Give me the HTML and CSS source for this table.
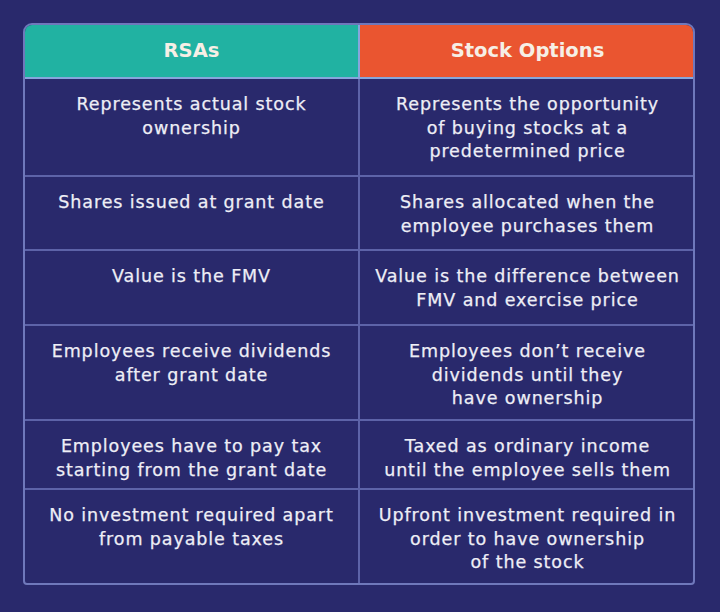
FILE: index.html
```html
<!DOCTYPE html>
<html lang="en">
<head>
<meta charset="utf-8">
<title>RSAs vs Stock Options</title>
<link rel="stylesheet" href="styles.css">
</head>
<body>
<div class="page">
  <div class="table">
    <div class="head head-rsa">RSAs</div>
    <div class="head head-opt">Stock Options</div>

    <div class="cell r1">Represents actual stock<br>ownership</div>
    <div class="cell r1 right">Represents the opportunity<br>of buying stocks at a<br>predetermined price</div>

    <div class="cell r2">Shares issued at grant date</div>
    <div class="cell r2 right">Shares allocated when the<br>employee purchases them</div>

    <div class="cell r3">Value is the FMV</div>
    <div class="cell r3 right">Value is the difference between<br>FMV and exercise price</div>

    <div class="cell r4">Employees receive dividends<br>after grant date</div>
    <div class="cell r4 right">Employees don’t receive<br>dividends until they<br>have ownership</div>

    <div class="cell r5">Employees have to pay tax<br>starting from the grant date</div>
    <div class="cell r5 right">Taxed as ordinary income<br>until the employee sells them</div>

    <div class="cell r6 last">No investment required apart<br>from payable taxes</div>
    <div class="cell r6 right last">Upfront investment required in<br>order to have ownership<br>of the stock</div>
  </div>
</div>
</body>
</html>
```

FILE: styles.css
```css
html, body {
  margin: 0;
  padding: 0;
}
body {
  background: #29296c;
  width: 720px;
  height: 612px;
  overflow: hidden;
  font-family: "DejaVu Sans", "Noto Sans", sans-serif;
  color: #eeeef6;
}
.page {
  padding: 23px 25px 0 23px;
}
.table {
  display: grid;
  grid-template-columns: 335px 335px;
  grid-template-rows: 54px 98px 74px 75px 95px 69px 93px;
  border: 2px solid #6f78bb;
  border-radius: 9px 9px 4px 4px;
  overflow: hidden;
  box-sizing: border-box;
  width: 672px;
}
.head {
  display: flex;
  align-items: center;
  justify-content: center;
  font-weight: 700;
  font-size: 19.5px;
  color: #f6efe6;
  border-bottom: 2px solid #86a6dc;
  padding-bottom: 2px;
}
.head-rsa {
  background: #21b2a2;
  border-right: 2px solid #86a6dc;
}
.head-opt {
  background: #ea5530;
}
.cell {
  text-align: center;
  font-size: 17.5px;
  letter-spacing: 0.9px;
  line-height: 23.5px;
  padding-top: 14px;
  -webkit-text-stroke: 0.25px #eeeef6;
  border-bottom: 2px solid #5d63a8;
  border-right: 2px solid #5d63a8;
}
.cell.right {
  border-right: none;
}
.cell.last {
  border-bottom: none;
}
```
